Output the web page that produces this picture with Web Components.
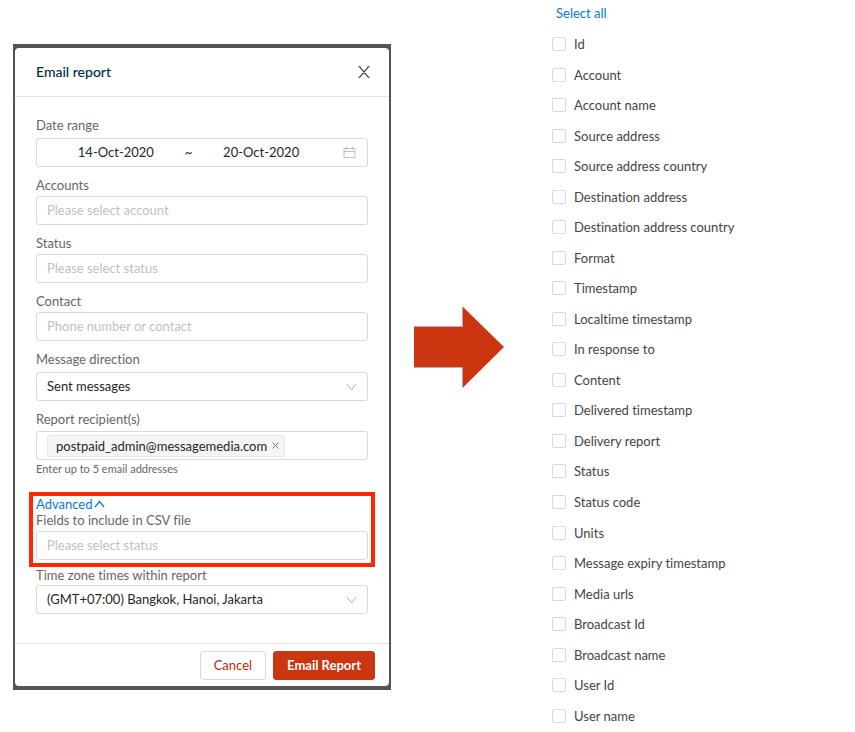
<!DOCTYPE html>
<html lang="en">
<head>
<meta charset="utf-8">
<meta name="viewport" content="width=device-width, initial-scale=1">
<title>Email report</title>
<style>
    :root {
        --brand: #cb3510;
        --link: #0678dc;
        --line: #d9d9d9;
        --label: #666;
        --text: #262626;
        --hint: #bfbfbf;
    }
    body {
        margin: 0;
        background-color: white;
        font-family: Lato, "Liberation Sans", sans-serif;
        font-size: 13px;
        line-height: 16px;
        font-variant-ligatures: none;
        color: var(--text);
    }
</style>
</head>
<body>
<report-page>
    <report-dialog slot="dialog" heading="Email report">
        <date-range label="Date range" from="14-Oct-2020" to="20-Oct-2020"></date-range>
        <text-field label="Accounts" placeholder="Please select account"></text-field>
        <text-field label="Status" placeholder="Please select status"></text-field>
        <text-field label="Contact" placeholder="Phone number or contact"></text-field>
        <select-field class="loose" label="Message direction" value="Sent messages"></select-field>
        <tag-field label="Report recipient(s)" value="postpaid_admin@messagemedia.com" hint="Enter up to 5 email addresses"></tag-field>
        <advanced-section>
            <text-field label="Fields to include in CSV file" placeholder="Please select status"></text-field>
        </advanced-section>
        <select-field class="zone" label="Time zone times within report" value="(GMT+07:00) Bangkok, Hanoi, Jakarta"></select-field>
        <action-button slot="actions">Cancel</action-button>
        <action-button slot="actions" primary>Email Report</action-button>
    </report-dialog>
    <flow-arrow slot="arrow"></flow-arrow>
    <field-list slot="list"></field-list>
</report-page>

<script>
const fieldStyles = `
    *{
        box-sizing: border-box;
    }
    :host {
        display: block;
        --label-gap: 3px;
    }
    label {
        display: block;
        margin-bottom: var(--label-gap);
        color: var(--label);
    }
    .box {
        display: flex;
        align-items: center;
        width: 100%;
        height: 29px;
        padding: 0 10px 2px;
        border: 1px solid var(--line);
        border-radius: 3px;
        background-color: white;
    }
    input, select {
        min-width: 0;
        margin: 0;
        font: inherit;
        font-variant-ligatures: none;
        color: var(--text);
        outline: none;
    }
    input::placeholder {
        color: var(--hint);
        opacity: 1;
    }
`;

class BaseElement extends HTMLElement
{
    constructor(){
        super();
        this.attachShadow({mode:"open"});
    }

    connectedCallback(){
        let template = document.createElement("template");
        template.innerHTML = `<style>${this.getStyles()}</style>${this.getMarkup()}`;
        this.shadowRoot.replaceChildren(template.content.cloneNode(true));
    }

    attr(name){
        return this.getAttribute(name) || "";
    }
}

class ReportPage extends BaseElement
{
    getMarkup(){
        return `
        <main>
            <slot name="dialog"></slot>
            <slot name="arrow"></slot>
            <slot name="list"></slot>
        </main>`;
    }

    getStyles(){
        return `
        :host {
            display: block;
        }
        main {
            display: grid;
            grid-template-columns: minmax(320px, 378fr) 90px minmax(240px, 328fr);
            column-gap: 23px;
            align-items: start;
            min-height: 100vh;
            padding-left: 13px;
        }
        ::slotted(report-dialog) {
            margin-top: 44px;
        }
        ::slotted(flow-arrow) {
            margin-top: 306px;
        }
        ::slotted(field-list) {
            align-self: stretch;
        }`;
    }
}

class ReportDialog extends BaseElement
{
    getMarkup(){
        return `
        <section role="dialog" aria-labelledby="heading">
            <header>
                <h1 id="heading">${this.attr("heading")}</h1>
                <button type="button" aria-label="Close">
                    <svg width="12" height="12" viewBox="0 0 12 12" fill="none" stroke="#555" stroke-width="1.2">
                        <path d="M1.4 .5 10.6 11.5M10.6 .5 1.4 11.5M.5 .6h2M9.5 .6h2M.5 11.4h2M9.5 11.4h2"/>
                    </svg>
                </button>
            </header>
            <div class="content"><slot></slot></div>
            <footer><slot name="actions"></slot></footer>
        </section>`;
    }

    getStyles(){
        return `
        :host {
            display: block;
            padding: 4px 2px;
            background-color: #545454;
        }
        section {
            border-radius: 4px;
            background-color: white;
        }
        header {
            display: flex;
            align-items: center;
            justify-content: space-between;
            height: 48px;
            padding: 0 17px 0 21px;
            border-bottom: 1px solid #e4e4e4;
        }
        h1 {
            margin: 0;
            font-size: 14px;
            font-weight: 500;
            color: #002b49;
        }
        button {
            display: flex;
            padding: 2px;
            border: none;
            background: none;
        }
        .content {
            display: flex;
            flex-direction: column;
            gap: 10px;
            padding: 20px 21px 29px;
        }
        footer {
            display: flex;
            justify-content: flex-end;
            gap: 7px;
            padding: 7px 14px 6px;
            border-top: 1px solid #e4e4e4;
        }
        ::slotted(advanced-section) {
            margin: 5px -7px 0;
        }
        ::slotted(.zone) {
            margin-top: -10px;
        }`;
    }
}

class TextField extends BaseElement
{
    getMarkup(){
        return `
        <label for="control">${this.attr("label")}</label>
        <input class="box" id="control" type="text" placeholder="${this.attr("placeholder")}">`;
    }

    getStyles(){
        return fieldStyles;
    }
}

class DateRange extends BaseElement
{
    getMarkup(){
        return `
        <label for="from">${this.attr("label")}</label>
        <div class="box">
            <input id="from" type="text" value="${this.attr("from")}">
            <span>~</span>
            <input type="text" aria-label="Date range end" value="${this.attr("to")}">
            <svg width="13" height="13" viewBox="0 0 13 13" fill="none" stroke="#bfbfbf">
                <path d="M1 2.5h11v9H1zM1 5.5h11M3.5 .5v3M9.5 .5v3"/>
            </svg>
        </div>`;
    }

    getStyles(){
        return `${fieldStyles}
        :host {
            --label-gap: 5px;
        }
        input {
            flex: 1;
            padding: 0;
            border: none;
            text-align: center;
        }
        svg {
            flex: none;
            margin: 2px 1px 0 13px;
        }`;
    }
}

class SelectField extends BaseElement
{
    getMarkup(){
        return `
        <label for="control">${this.attr("label")}</label>
        <div class="picker">
            <select class="box" id="control"><option>${this.attr("value")}</option></select>
            <svg width="11" height="8" viewBox="0 0 11 8" fill="none" stroke="#b4b4b4">
                <path d="M1 1 5.5 7 10 1"/>
            </svg>
        </div>`;
    }

    getStyles(){
        return `${fieldStyles}
        :host {
            --label-gap: 2px;
        }
        :host(.loose) {
            --label-gap: 5px;
        }
        .picker {
            display: grid;
            align-items: center;
        }
        select, svg {
            grid-area: 1 / 1;
        }
        select {
            appearance: none;
        }
        svg {
            justify-self: end;
            margin-right: 11px;
            pointer-events: none;
        }`;
    }
}

class TagField extends BaseElement
{
    getMarkup(){
        return `
        <label for="control">${this.attr("label")}</label>
        <div class="box">
            <span class="tag">${this.attr("value")}
                <button type="button" aria-label="Remove">
                    <svg width="7" height="7" viewBox="0 0 7 7" fill="none" stroke="#777">
                        <path d="M.5 .5 6.5 6.5M6.5 .5 .5 6.5"/>
                    </svg>
                </button>
            </span>
            <input id="control" type="text" aria-describedby="hint">
        </div>
        <p id="hint">${this.attr("hint")}</p>`;
    }

    getStyles(){
        return `${fieldStyles}
        :host {
            --label-gap: 4px;
        }
        .box {
            padding-bottom: 0;
        }
        .tag {
            display: flex;
            align-items: center;
            gap: 5px;
            height: 22px;
            padding: 0 5px 0 8px;
            border: 1px solid #e8e8e8;
            border-radius: 2px;
            background-color: #f5f5f5;
        }
        button {
            display: flex;
            padding: 0;
            border: none;
            background: none;
        }
        input {
            flex: 1;
            padding: 0;
            border: none;
        }
        p {
            margin: 0;
            padding-top: 1px;
            font-size: 11px;
            color: var(--label);
        }`;
    }
}

class AdvancedSection extends BaseElement
{
    getMarkup(){
        return `
        <button type="button" aria-expanded="true">Advanced
            <svg width="11" height="8" viewBox="0 0 11 8" fill="none" stroke="currentColor" stroke-width="1.2">
                <path d="M1 7 5.5 1.5 10 7"/>
            </svg>
        </button>
        <slot></slot>`;
    }

    getStyles(){
        return `
        :host {
            display: block;
            padding: 0 3px 3px;
            border: 4px solid #ff2600;
        }
        button {
            display: flex;
            align-items: center;
            gap: 2px;
            padding: 0;
            border: none;
            background: none;
            font: inherit;
            color: var(--link);
        }`;
    }
}

class ActionButton extends BaseElement
{
    getMarkup(){
        return `<button type="button"><slot></slot></button>`;
    }

    getStyles(){
        return `
        :host {
            display: block;
        }
        button {
            height: 29px;
            padding: 0 13px 2px;
            border: 1px solid var(--line);
            border-radius: 3px;
            background-color: white;
            font: inherit;
            color: #b8290c;
        }
        :host([primary]) button {
            border-color: var(--brand);
            background-color: var(--brand);
            font-weight: 700;
            color: white;
        }`;
    }
}

class FlowArrow extends BaseElement
{
    getMarkup(){
        return `
        <svg viewBox="0 0 90 82" aria-hidden="true">
            <path d="M0 20.5H48.5V.5L90 41 48.5 82V61.5H0z" fill="#cb3510"/>
            <path d="M0 20.5H48.5V.5M48.5 82V61.5H0" fill="none" stroke="#a9b3cc" stroke-width=".7"/>
        </svg>`;
    }

    getStyles(){
        return `
        :host {
            display: block;
        }
        svg {
            display: block;
            width: 100%;
        }`;
    }
}

class FieldList extends BaseElement
{
    get fields(){
        return [
            "Id", "Account", "Account name", "Source address", "Source address country",
            "Destination address", "Destination address country", "Format", "Timestamp",
            "Localtime timestamp", "In response to", "Content", "Delivered timestamp",
            "Delivery report", "Status", "Status code", "Units", "Message expiry timestamp",
            "Media urls", "Broadcast Id", "Broadcast name", "User Id", "User name"
        ];
    }

    getMarkup(){
        return `
        <a href="#all">Select all</a>
        ${this.fields.map(name => `<label><input type="checkbox">${name}</label>`).join("")}`;
    }

    getStyles(){
        return `
        :host {
            display: flex;
            flex-direction: column;
            padding: 0 0 1px 25px;
        }
        a {
            height: 24px;
            padding: 5px 4px 0;
            color: var(--link);
            text-decoration: none;
        }
        /* rows share the height that the link leaves */
        label {
            display: flex;
            flex: 1;
            align-items: center;
            gap: 8px;
            color: #444;
        }
        input {
            appearance: none;
            width: 14px;
            height: 14px;
            margin: 0;
            border: 1px solid var(--line);
            border-radius: 2px;
            background-color: white;
        }
        input:checked {
            background-color: var(--link);
        }`;
    }
}

customElements.define('report-page',ReportPage);
customElements.define('report-dialog',ReportDialog);
customElements.define('text-field',TextField);
customElements.define('date-range',DateRange);
customElements.define('select-field',SelectField);
customElements.define('tag-field',TagField);
customElements.define('advanced-section',AdvancedSection);
customElements.define('action-button',ActionButton);
customElements.define('flow-arrow',FlowArrow);
customElements.define('field-list',FieldList);
</script>
</body>
</html>
